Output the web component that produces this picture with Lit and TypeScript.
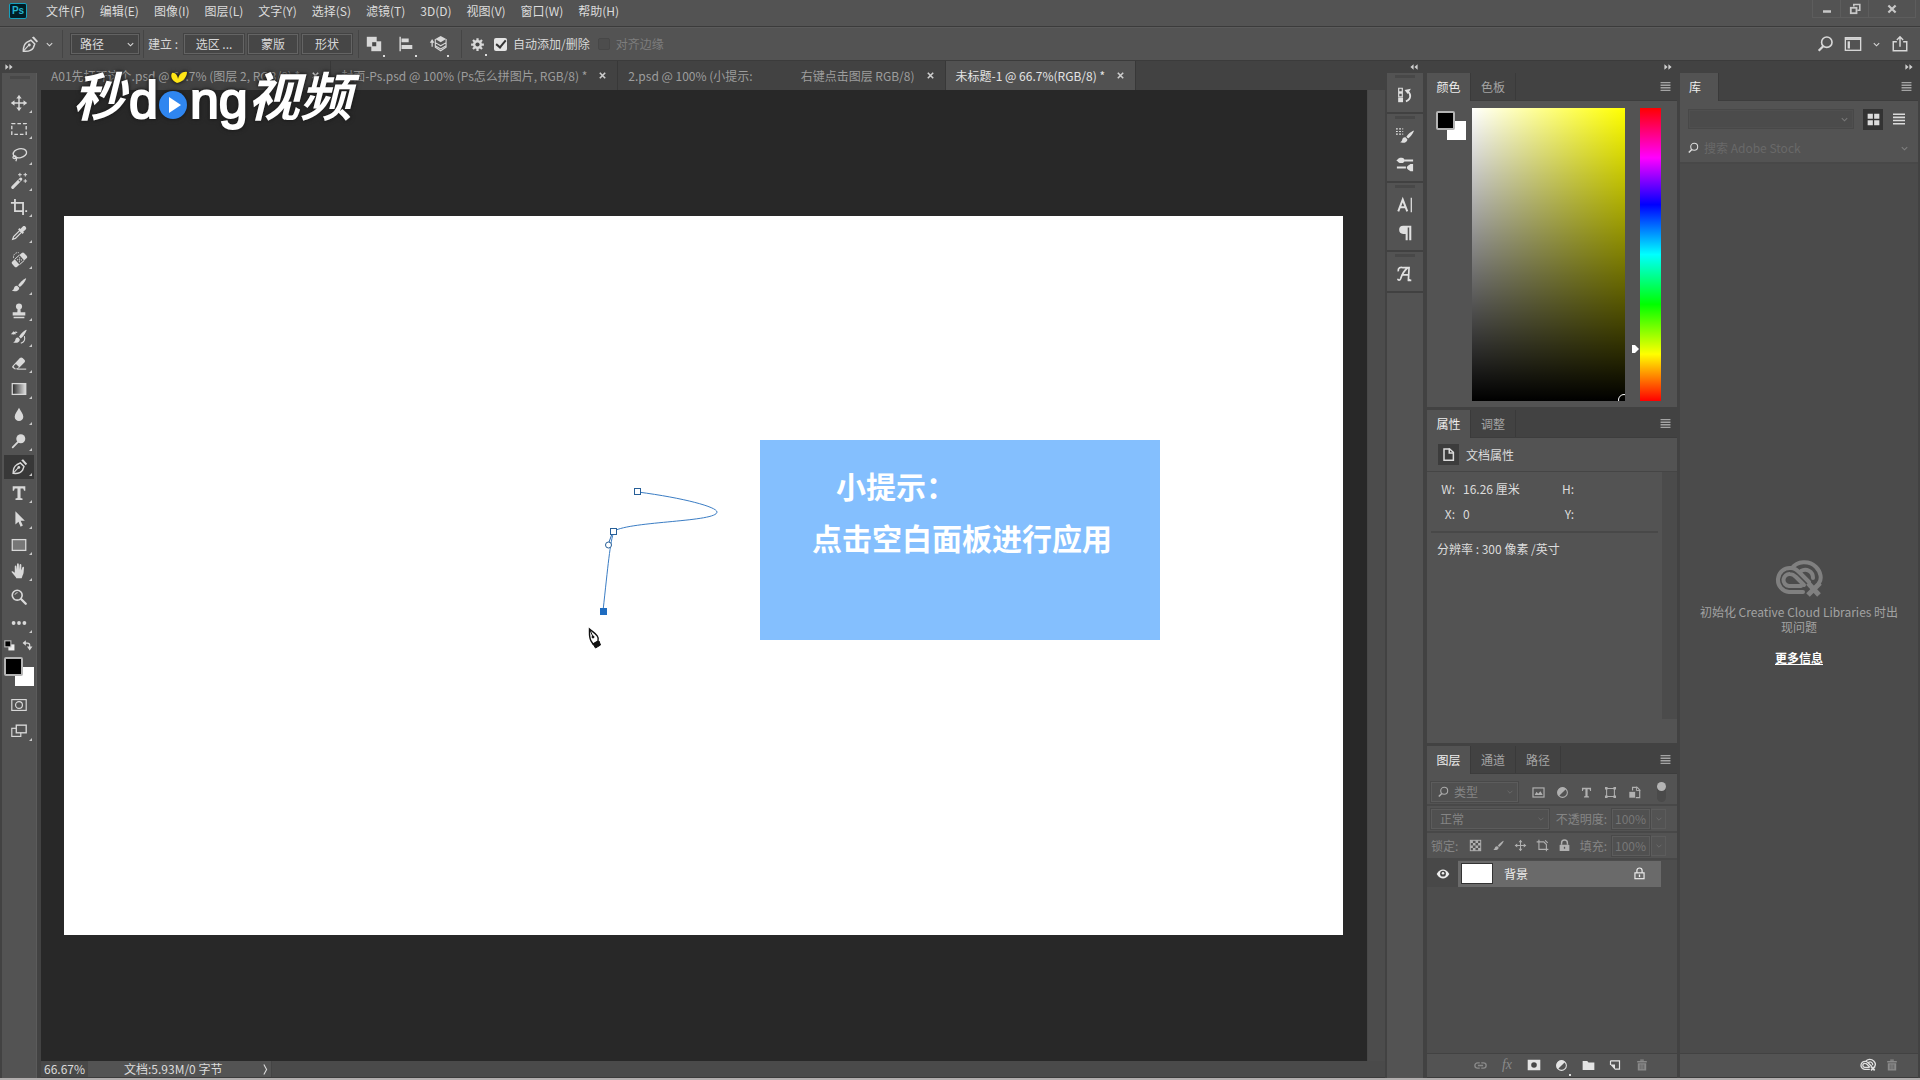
import { LitElement, html, svg, css, nothing, type TemplateResult, type SVGTemplateResult } from "lit";
import { customElement, property } from "lit/decorators.js";
import { classMap } from "lit/directives/class-map.js";

/* Every glyph is drawn on a 20 x 20 grid with currentColor. */
const glyphs: Record<string, SVGTemplateResult> = {
  move: svg`<path d="M10 2v16M2 10h16" stroke="currentColor" stroke-width="1.6"/><path d="M10 1l3 4H7zM10 19l-3-4h6zM1 10l4-3v6zM19 10l-4 3V7z" fill="currentColor"/>`,
  marquee: svg`<rect x="2" y="4" width="16" height="12" fill="none" stroke="currentColor" stroke-width="1.5" stroke-dasharray="4 2.2"/>`,
  lasso: svg`<ellipse cx="11" cy="8" rx="7.5" ry="5" transform="rotate(-12 11 8)" fill="none" stroke="currentColor" stroke-width="1.5"/><path d="M5 11c-2 0-2.5 3 0 3s2.5-3 0-3c2 1 3 3 1.5 6" fill="none" stroke="currentColor" stroke-width="1.4"/>`,
  wand: svg`<path d="M3 17L12 8" stroke="currentColor" stroke-width="3.4" stroke-linecap="round"/><path d="M9.5 8.500l2 2" stroke="#535353" stroke-width="1.2"/><path d="M11 1v4M9 3h4M17 1v4M15 3h4M17 8v4M15 10h4" stroke="currentColor" stroke-width="1.1"/>`,
  crop: svg`<path d="M5.5 1v13.500H15M1 5.500h13.500V19M17 14.500h2" fill="none" stroke="currentColor" stroke-width="2"/>`,
  dropper: svg`<path d="M3 17l1-3 7-7 2 2-7 7z" fill="none" stroke="currentColor" stroke-width="1.4"/><path d="M9 6l5 5 1.500-1.500-.8-.8 3-3c1.200-1.600-1.200-4.600-3.200-3.200l-3 3-1-1z" fill="currentColor"/>`,
  heal: svg`<path d="M4 9a5 5 0 0 1 6-6" fill="none" stroke="currentColor" stroke-dasharray="2 1"/><g transform="rotate(-42 10.500 11)"><rect x="1.5" y="7" width="18" height="8" rx="2" fill="currentColor"/><rect x="7" y="7" width="7" height="8" fill="#535353"/><path d="M8.500 9.500h1.200M11.500 9.500h1.200M8.500 12.500h1.200M11.500 12.500h1.200M10 11h1.200" stroke="currentColor" stroke-width="1.3"/><path d="M7 7h7M7 15h7" stroke="currentColor"/></g>`,
  brush: svg`<path d="M17.500 2.500c-3 1.500-6.500 4.800-8.500 7.800l2 2c3-2.300 5.700-6 7-9.300z" fill="currentColor"/><path d="M8.200 11c-2.400-.3-3.500 1.200-3.900 3-.2 1.200-1 2-2.300 2.500 2.800 1 8.300.8 8.200-3.500z" fill="currentColor"/>`,
  stamp: svg`<circle cx="10" cy="5" r="3.4" fill="currentColor"/><path d="M8.500 7h3l.4 4.500H17V15H3v-3.500h5.100zM4 16.500h12V18H4z" fill="currentColor"/>`,
  history: svg`<path d="M18 2c-3 1.500-6.500 4.800-8 7.800l2 2c3-2.300 5-6 6.500-9.300zM9.200 10.500c-2.400-.3-3 1.200-3.400 3-.2 1.200-1 2-2.300 2.500 2.800 1 7.500.8 7.400-3.500z" fill="currentColor"/><path d="M8 5C6 4 4 5 3.500 7M16 9c1 4-1 7-4 8" fill="none" stroke="currentColor" stroke-width="1.2"/><path d="M1 7h6L4 3.500z" fill="currentColor"/>`,
  eraser: svg`<path d="M2.500 13.500L11 4.500c1-1 2-1 3 0l2 2c1 1 1 2 0 3L8.500 17H5l-2.500-2z" fill="currentColor"/><path d="M4 13.600l2.600-2.600 3.400 3.400L8 16H5.600z" fill="#535353"/><path d="M8 16.800h10" stroke="currentColor" stroke-width="1.2"/>`,
  gradient: svg`<defs><linearGradient id="tool-gradient"><stop offset="0" stop-color="#2a2a2a"/><stop offset="1" stop-color="#e0e0e0"/></linearGradient></defs><rect x="2.5" y="4" width="15" height="12" fill="url(#tool-gradient)" stroke="currentColor" stroke-width="1.4"/>`,
  drop: svg`<path d="M10 2c1.500 3.500 4.800 6.300 4.800 10a4.800 4.800 0 0 1-9.600 0C5.200 8.300 8.500 5.500 10 2z" fill="currentColor"/>`,
  dodge: svg`<circle cx="12" cy="7.5" r="5" fill="currentColor"/><path d="M9 11l-6 6" stroke="currentColor" stroke-width="2" stroke-linecap="round"/>`,
  pen: svg`<path d="M3.500 17c0-4.500 1.500-8 4-9.500l4-2 4 4-1.500 4C12.500 16 8 17.500 3.500 17z" fill="none" stroke="currentColor" stroke-width="1.6"/><path d="M12.500 2.500l2-1 4.500 5-1.500 1.500z" fill="currentColor"/><path d="M4 16.500l5.500-6" stroke="currentColor" stroke-width="1.2"/><circle cx="9.8" cy="10.5" r="1.5" fill="currentColor"/>`,
  type: svg`<path d="M3 2.500h14v5h-1.400l-.9-2.600h-3v10.600l2.200.5V17.800H6.100V16l2.200-.5V4.900h-3L4.400 7.500H3z" fill="currentColor"/>`,
  select: svg`<path d="M6 1.500v14.500l3.400-3 2.400 5.500 2.500-1.200-2.500-5.300h4.700z" fill="currentColor"/>`,
  rect: svg`<rect x="2.5" y="4" width="15" height="12" fill="#777" stroke="currentColor" stroke-width="1.4"/>`,
  hand: svg`<path d="M6.500 17c-1.500-2-3.500-4-5-6.200.8-1.200 2-.6 3.800 1.200V5c0-1.400 1.700-1.400 1.800 0l.3 4 .4-6.500c.1-1.400 1.900-1.400 2 0l.2 6.300.7-5.800c.2-1.300 1.900-1.200 1.900.2L12.500 9.500l1.300-3.700c.5-1.100 2-.7 1.800.6C15 11 15.500 13 14 15l-1 3H7z" fill="currentColor"/>`,
  zoom: svg`<circle cx="8" cy="8" r="5.5" fill="none" stroke="currentColor" stroke-width="1.8"/><path d="M12.500 12.500l5 5" stroke="currentColor" stroke-width="2.6" stroke-linecap="round"/><path d="M5.500 7.500a3 3 0 0 1 3-2.300" fill="none" stroke="currentColor"/>`,
  more: svg`<circle cx="4" cy="10" r="2.1" fill="currentColor"/><circle cx="10" cy="10" r="2.1" fill="currentColor"/><circle cx="16" cy="10" r="2.1" fill="currentColor"/>`,
  mask: svg`<rect x="2" y="4" width="16" height="12" fill="none" stroke="currentColor" stroke-width="1.3"/><circle cx="10" cy="10" r="3.8" fill="none" stroke="currentColor" stroke-width="1.3"/>`,
  screen: svg`<rect x="2" y="7" width="10" height="9" fill="none" stroke="currentColor" stroke-width="1.3"/><rect x="7" y="3.5" width="11" height="8.5" fill="#535353" stroke="currentColor" stroke-width="1.5"/>`,
  unite: svg`<rect x="2" y="2" width="11" height="11" fill="currentColor"/><rect x="7" y="7" width="11" height="11" fill="currentColor"/><rect x="8" y="8" width="4.5" height="4.5" fill="#484848"/>`,
  align: svg`<path d="M3.500 2v16" stroke="currentColor" stroke-width="1.6"/><path d="M5 4h8v4H5zM5 11h12v4.500H5z" fill="currentColor"/>`,
  arrange: svg`<path d="M3.500 7v6" stroke="currentColor" stroke-width="1.4"/><path d="M3.500 4.500l2.600 4H.9z" fill="currentColor"/><path d="M13 1l6 3.500L13 8 7 4.500z" fill="currentColor"/><path d="M7 8.500l6 3.500 6-3.500M7 12l6 3.500 6-3.500M7 4.500v9l6 4 6-4v-9" fill="none" stroke="currentColor" stroke-width="1.2"/>`,
  gear: svg`<path d="M10 1.500v17M1.500 10h17M4 4l12 12M16 4L4 16" stroke="currentColor" stroke-width="3"/><circle cx="10" cy="10" r="6" fill="currentColor"/><circle cx="10" cy="10" r="2.8" fill="#484848"/>`,
  search: svg`<circle cx="12" cy="8" r="5.8" fill="none" stroke="currentColor" stroke-width="1.8"/><path d="M8 12.500l-5 5" stroke="currentColor" stroke-width="2.6"/>`,
  workspace: svg`<rect x="1.5" y="3" width="17" height="14" fill="none" stroke="currentColor" stroke-width="1.5"/><path d="M1.500 4.500h17" stroke="currentColor" stroke-width="2"/><rect x="4" y="7" width="2.6" height="8" fill="currentColor"/>`,
  share: svg`<path d="M6.500 7.500H2.500v10h15v-10h-4" fill="none" stroke="currentColor" stroke-width="1.6"/><path d="M10 13V2M6.500 5.500L10 2l3.500 3.500" fill="none" stroke="currentColor" stroke-width="1.6"/>`,
  chevron: svg`<path d="M4 7l6 6 6-6" fill="none" stroke="currentColor" stroke-width="2.4"/>`,
  chevronRight: svg`<path d="M7 1l5 9-5 9" fill="none" stroke="currentColor" stroke-width="2"/>`,
  forward: svg`<path d="M1 3l8 7-8 7zM11 3l8 7-8 7z" fill="currentColor"/>`,
  back: svg`<path d="M9 3l-8 7 8 7zM19 3l-8 7 8 7z" fill="currentColor"/>`,
  menu: svg`<path d="M1 3h18M1 7.600h18M1 12.300h18M1 17h18" stroke="currentColor" stroke-width="2.6"/>`,
  close: svg`<path d="M4 4l12 12M16 4L4 16" stroke="currentColor" stroke-width="3.6"/>`,
  minimize: svg`<path d="M2 15h16" stroke="currentColor" stroke-width="5"/>`,
  restore: svg`<path d="M8 6V2.500h10V12h-4" fill="none" stroke="currentColor" stroke-width="2.6"/><rect x="3" y="8" width="9.5" height="9" fill="none" stroke="currentColor" stroke-width="3"/>`,
  historyPanel: svg`<path d="M3 2.500h4v4H3zM3 8h4v4H3z" fill="none" stroke="currentColor" stroke-width="1.3"/><rect x="2.4" y="13" width="5.4" height="5" fill="currentColor"/><path d="M11 17c6-2 6-8 2-11" fill="none" stroke="currentColor" stroke-width="2"/><path d="M9.500 4.500L16.500 3 13 9z" fill="currentColor"/>`,
  brushPanel: svg`<path d="M0 2h2M0 5h2M0 8h2M3.500 2h2M3.500 5h2M3.500 8h2M7 2h1M7 5h1M7 8h1" stroke="currentColor" stroke-width="1.3"/><path d="M19.500 4c-3 1.500-6 4-8 6.800l2 2c2.800-2 5-5.200 6.300-8.200zM10.500 11.500c-2.400-.3-3.200 1.200-3.600 2.800-.2 1.200-1 2.200-2.300 2.700 2.800 1 8 .6 8-3.500z" fill="currentColor"/>`,
  brushSet: svg`<path d="M9 6h10M1 14h10" stroke="currentColor" stroke-width="2.2"/><path d="M0 6c2 0 2-3 5.500-3C9 3 9.500 5 9.500 6S9 9 5.500 9C2 9 2 6 0 6zM12 14c0-2 3-3 4-4h3v8h-3c-1-1-4-2-4-4z" fill="currentColor"/>`,
  character: svg`<path d="M2.500 17L7.500 4l5 13M4.200 12.500h6.600" fill="none" stroke="currentColor" stroke-width="2.2"/><path d="M17 2v16" stroke="currentColor" stroke-width="1.4"/>`,
  paragraph: svg`<path d="M9 2h8v16h-2.300V4H13v14h-2.300v-7H8A4.500 4.500 0 0 1 8 2z" fill="currentColor"/>`,
  glyphPanel: svg`<path d="M2.500 7C2 3 5 2 8 3h6.500L13.800 16.500h2M13 3C9 6 6.500 11 5 15.500c-.7 1.800-3 1.500-3-.2M6 11h8.500M13 17h4" fill="none" stroke="currentColor" stroke-width="1.9"/>`,
  grid: svg`<path d="M1 1h8v8H1zM11 1h8v8h-8zM1 11h8v8H1zM11 11h8v8h-8z" fill="currentColor"/>`,
  list: svg`<path d="M0 2h20M0 7.300h20M0 12.600h20M0 18h20" stroke="currentColor" stroke-width="2.6"/>`,
  doc: svg`<path d="M4 2.500h7.500L16.500 7v10.500H4z" fill="none" stroke="currentColor" stroke-width="2"/><path d="M11 2v6h6" fill="none" stroke="currentColor" stroke-width="2"/>`,
  image: svg`<rect x="1.5" y="3" width="17" height="14" fill="none" stroke="currentColor" stroke-width="1.8"/><path d="M4 14l3-5 2.500 3L13 8l3.500 6z" fill="currentColor"/>`,
  adjust: svg`<circle cx="10" cy="10" r="7.5" fill="none" stroke="currentColor" stroke-width="1.6"/><path d="M15.500 4.500a7.700 7.700 0 0 0-11 11z" fill="currentColor"/>`,
  shape: svg`<path d="M4 4h12v12H4z" fill="none" stroke="currentColor" stroke-width="1.6"/><path d="M1.500 1.500h4v4h-4zM14.500 1.500h4v4h-4zM1.500 14.500h4v4h-4zM14.500 14.500h4v4h-4z" fill="currentColor"/>`,
  smart: svg`<path d="M7 7V2h7l4 4v12h-6" fill="none" stroke="currentColor" stroke-width="1.8"/><rect x="2" y="9" width="9" height="9" fill="currentColor"/><path d="M13 1v6h6" fill="none" stroke="currentColor" stroke-width="1.5"/>`,
  checker: svg`<rect x="2" y="2" width="16" height="16" fill="none" stroke="currentColor" stroke-width="1.5"/><path d="M2 2h4v4H2zM10 2h4v4h-4zM6 6h4v4H6zM14 6h4v4h-4zM2 10h4v4H2zM10 10h4v4h-4zM6 14h4v4H6zM14 14h4v4h-4z" fill="currentColor"/>`,
  frame: svg`<path d="M4.500 1v15H19M1 4.500h11l4 4V19M14 2l4 4" fill="none" stroke="currentColor" stroke-width="1.7"/>`,
  lock: svg`<rect x="2.5" y="9" width="15" height="9.5" rx="1" fill="currentColor"/><path d="M5.500 9V6a4.500 4.500 0 0 1 9 0v3" fill="none" stroke="currentColor" stroke-width="2.2"/><rect x="9" y="12" width="2" height="3" fill="#535353"/>`,
  lockLine: svg`<rect x="3" y="9" width="14" height="9" fill="none" stroke="currentColor" stroke-width="1.8"/><path d="M6 9V5.500a4 4 0 0 1 8 0V9" fill="none" stroke="currentColor" stroke-width="1.8"/><rect x="9" y="11.5" width="2" height="4" fill="currentColor"/>`,
  eye: svg`<path d="M1 10c3-5 6-6.500 9-6.500S16 5 19 10c-3 5-6 6.500-9 6.500S4 15 1 10z" fill="currentColor"/><circle cx="10" cy="9.5" r="4.2" fill="#484848"/><circle cx="10" cy="9" r="1.8" fill="currentColor"/>`,
  link: svg`<path d="M9 6.500H6a3.500 3.500 0 0 0 0 7h3M11 6.500h3a3.500 3.500 0 0 1 0 7h-3M6.500 10h7" fill="none" stroke="currentColor" stroke-width="1.8"/>`,
  maskFill: svg`<rect x="1" y="2.5" width="18" height="15" fill="currentColor"/><circle cx="10" cy="10" r="4" fill="#484848"/>`,
  folder: svg`<path d="M1 3h7l2 2.500h9V17H1z" fill="currentColor"/>`,
  newLayer: svg`<path d="M2.500 3h15v14H10" fill="none" stroke="currentColor" stroke-width="2"/><path d="M2 9h8v9z" fill="currentColor"/><path d="M2.500 3v7" stroke="currentColor" stroke-width="2"/>`,
  trash: svg`<path d="M3 7h14v12H3zM2 3.500h16V6H2zM7 1h6v2H7z" fill="currentColor"/><path d="M7 9v8M10 9v8M13 9v8" stroke="#535353" stroke-width="1.1"/>`,
  swap: svg`<path d="M5 5.500h5a4 4 0 0 1 4 4V13" fill="none" stroke="currentColor" stroke-width="2.2"/><path d="M7 .5v10l-6-5zM9 12h10l-5 7z" fill="currentColor"/>`,
  defaults: svg`<rect x="8" y="8" width="11" height="11" fill="#eee"/><rect x="1.5" y="1.5" width="11" height="11" fill="#000" stroke="#bbb" stroke-width="2"/>`,
};

@customElement("ps-icon")
export class PsIcon extends LitElement {
  @property() name = "";
  @property({ type: Number }) size = 18;
  static styles = css`
    :host { display: inline-flex; flex: none; }
    svg { display: block; }
  `;
  render() {
    return html`<svg width=${this.size} height=${this.size} viewBox="0 0 20 20" aria-hidden="true">${glyphs[this.name] ?? nothing}</svg>`;
  }
}

const icon = (name: string, size = 18): TemplateResult => html`<ps-icon name=${name} size=${size}></ps-icon>`;

const menus = ["文件(F)", "编辑(E)", "图像(I)", "图层(L)", "文字(Y)", "选择(S)", "滤镜(T)", "3D(D)", "视图(V)", "窗口(W)", "帮助(H)"];

const tools: [string, string][] = [
  ["move", "移动"], ["marquee", "选框"], ["lasso", "套索"], ["wand", "魔棒"], ["crop", "裁剪"],
  ["dropper", "吸管"], ["heal", "修复"], ["brush", "画笔"], ["stamp", "图章"], ["history", "历史记录画笔"],
  ["eraser", "橡皮擦"], ["gradient", "渐变"], ["drop", "模糊"], ["dodge", "减淡"], ["pen", "钢笔"],
  ["type", "文字"], ["select", "路径选择"], ["rect", "矩形"], ["hand", "抓手"], ["zoom", "缩放"], ["more", "更多"],
];

const documents = [
  { title: "A01先打开这个.psd @ 66.7% (图层 2, RGB/8) *", active: false },
  { title: "封面-Ps.psd @ 100% (Ps怎么拼图片, RGB/8) *", active: false },
  { title: "2.psd @ 100% (小提示:\u3000\u3000\u3000\u3000右键点击图层 RGB/8)", active: false },
  { title: "未标题-1 @ 66.7%(RGB/8) *", active: true },
];

const dockGroups = [["historyPanel"], ["brushPanel", "brushSet"], ["character", "paragraph"], ["glyphPanel"]];

@customElement("app-root")
export class AppRoot extends LitElement {
  static styles = css`
    :host {
      display: block;
      --body: #535353;
      --bar: #424242;
      --edge: #3b3b3b;
      --text: #dcdcdc;
      --off: #858585;
      color: var(--text);
      font: 12px/16px "Noto Sans CJK SC", "Noto Sans", sans-serif;
    }
    * { box-sizing: border-box; }
    button, select, input { font: inherit; color: inherit; margin: 0; }
    button { border: 0; background: none; padding: 0; display: flex; align-items: center; justify-content: center; }
    .app { display: flex; flex-direction: column; height: 100vh; min-height: 800px; background: var(--body); border-bottom: 2px solid #b2aeae; overflow: hidden; }

    .menubar { display: flex; height: 27px; padding: 0 0 4px 9px; align-items: center; border-bottom: 1px solid var(--edge); flex: none; }
    .logo { width: 18px; height: 16px; background: #001d26; border: 1px solid #17a0bd; border-radius: 2px; color: #25b4cf; font: bold 10px/14px "Liberation Sans", sans-serif; text-align: center; margin-right: 12px; }
    .menus { display: flex; flex: 1; }
    .menus button { padding: 0 8px 0 7px; white-space: nowrap; }
    .window { display: flex; align-self: flex-start; color: #c8c8c8; height: 18px; border: 1px solid #5d5d5d; border-top: 0; margin-right: 4px; }
    .window button { width: 28px; border-right: 1px solid #5d5d5d; }
    .window .wide { width: 46px; border: 0; }

    .options { display: flex; align-items: center; height: 34px; padding: 0 11px 0 20px; flex: none; border-bottom: 1px solid var(--edge); border-top: 1px solid #5b5b5b; color: #d8d8d8; }
    .options .group { display: flex; align-items: center; height: 28px; }
    .options .sep { width: 1px; height: 28px; background: #454545; }
    .with-chevron { gap: 6px; padding-right: 8px; }
    .combo { display: flex; align-items: center; position: relative; }
    .combo select { appearance: none; border: 1px solid #626262; background: #454545; height: 20px; width: 100%; padding: 0 8px; line-height: 16px; outline: 1px solid #3f3f3f; }
    .combo ps-icon { position: absolute; right: 4px; pointer-events: none; }
    .mode { width: 68px; margin: 0 4px 0 8px; }
    .make { margin: 0 6px 0 4px; }
    .push { height: 20px; border: 1px solid #646464; background: #464646; width: 50px; outline: 1px solid #434343; }
    .push.wide { width: 60px; }
    .options .pushes { gap: 4px; padding-right: 6px; }
    .flagged { position: relative; }
    .flagged::after { content: ""; position: absolute; right: -2px; bottom: -4px; width: 2px; height: 2px; background: #ddd; }
    .options .path-ops { gap: 14px; padding: 0 14px 0 6px; }
    .options .gearbox { padding: 0 9px 0 8px; }
    .check { display: flex; align-items: center; gap: 6px; margin-right: 8px; }
    .check input { appearance: none; width: 13px; height: 13px; border-radius: 2px; background: #e4e4e4; display: grid; place-items: center; }
    .check input:checked::before { content: ""; width: 4px; height: 8px; border: solid #333; border-width: 0 2px 2px 0; transform: rotate(40deg); margin-bottom: 2px; }
    .check.off { color: #7d7d7d; }
    .check.off input { background: #4d4d4d; border: 1px solid #474747; width: 12px; height: 12px; }
    .spacer { flex: 1; }
    .options .right { gap: 10px; }

    .main { display: flex; flex: 1; min-height: 0; background: var(--bar); gap: 2px; padding-right: 2px; }
    .collapse { height: 12px; display: flex; align-items: center; color: #cfcfcf; flex: none; }
    .collapse.end { justify-content: flex-end; padding-right: 5px; }

    .toolbar { width: 39px; display: flex; flex-direction: column; padding: 0 2px; flex: none; }
    .toolbar .collapse { padding-left: 3px; }
    .toolbody { flex: 1; background: var(--body); display: flex; flex-direction: column; padding: 3px 0 0 2px; border-right: 1px solid #5b5b5b; color: #d9d9d9; }
    .grip { width: 20px; height: 3px; background: #484848; margin: 0 auto 11px; flex: none; }
    .tool { width: 30px; height: 26px; position: relative; flex: none; }
    .tool.active { background: #383838; height: 24px; margin: 1px 0; }
    .tool::after { content: ""; position: absolute; right: 2px; bottom: 3px; border-left: 3px solid transparent; border-bottom: 3px solid #c8c8c8; }
    .tool.plain::after { display: none; }
    .mini { display: flex; justify-content: space-between; padding: 4px 3px 0 0; }
    .swatches { position: relative; width: 30px; height: 29px; margin-bottom: 6px; flex: none; }
    .mini + .swatches { margin-top: 6px; }
    .fg, .bg { position: absolute; width: 19px; height: 19px; }
    .fg { left: 0; top: 0; background: #000; border: 2px solid #b4b4b4; border-radius: 2px; }
    .bg { right: 0; bottom: 0; background: #fff; }

    .document { flex: 1; min-width: 0; display: flex; flex-direction: column; position: relative; }
    .tabs { display: flex; height: 29px; background: var(--bar); flex: none; overflow: hidden; }
    .tab { display: flex; align-items: center; gap: 11px; padding: 0 10px; border-right: 1px solid #383838; color: #9d9d9d; white-space: nowrap; flex: none; }
    .tab button { color: #cdcdcd; }
    .tab.active { background: #515151; color: #e4e4e4; }
    .viewport { flex: 1; display: flex; min-height: 0; }
    .stage { flex: 1; background: #282828; padding: 126px 24px 126px 23px; display: flex; min-width: 0; }
    .scroll { width: 18px; background: #4c4c4c; border-left: 1px solid #484848; }
    .artboard { flex: 1; background: #fff; position: relative; overflow: hidden; }
    .path { position: absolute; left: 500px; top: 260px; }
    .tip { position: absolute; left: 696px; top: 224px; width: 400px; height: 200px; background: #84bffe; color: #fff; font-weight: 700; font-size: 30px; line-height: 52px; padding: 19px 0 0 52px; }
    .tip p { margin: 0; }
    .tip .lead { padding-left: 24px; }
    .status { display: flex; height: 17px; background: #4a4a4a; border-bottom: 1px solid #3b3b3b; flex: none; }
    .status .zoomlevel { width: 47px; padding-left: 3px; background: #484848; }
    .status .info { width: 184px; background: #535353; display: flex; align-items: center; justify-content: space-between; padding: 0 0 0 36px; border-right: 1px solid #444; }
    .watermark { position: absolute; left: 32px; top: 3px; display: flex; align-items: center; height: 64px; color: #fff; font-weight: 700; font-size: 52px; line-height: 64px; filter: drop-shadow(0 0 1px #1c1c1c) drop-shadow(0 0 2px #1c1c1c); }
    .watermark .han { font-style: italic; padding-bottom: 4px; }
    .watermark .latin { font-family: "Liberation Sans", sans-serif; font-weight: 400; -webkit-text-stroke: 2px #fff; padding-top: 8px; }
    .watermark .first { padding-left: 4px; }
    .watermark svg { display: block; margin: 4px 1px 0; }

    .dock { width: 36px; display: flex; flex-direction: column; flex: none; }
    .dockgroup { background: var(--body); border-bottom: 2px solid #414141; padding: 2px 0 3px; display: flex; flex-direction: column; align-items: center; color: #e0e0e0; }
    .dockgroup .grip { margin: 0 0 3px; }
    .dockgroup button { height: 28px; }
    .dock .rest { flex: 1; background: var(--body); }

    .panels { width: 252px; display: flex; flex-direction: column; flex: none; padding-left: 2px; }
    .library { width: 238px; display: flex; flex-direction: column; flex: none; margin-left: 1px; }
    .panel { background: var(--body); display: flex; flex-direction: column; margin-bottom: 3px; flex: none; }
    .panel.grow { flex: 1; margin: 0; min-height: 0; }
    .ptabs { display: flex; height: 28px; background: var(--bar); align-items: stretch; flex: none; border-bottom: 1px solid #3d3d3d; padding-right: 6px; }
    .ptabs button { width: 45px; border-right: 1px solid #3a3a3a; color: #a4a4a4; }
    .ptabs button.active { background: var(--body); color: #eee; width: 44px; height: 28px; }
    .ptabs .pmenu { width: 11px; border: 0; margin-left: auto; }

    .colors { display: flex; padding: 7px 16px 6px 9px; }
    .colors .swatches { margin: 3px 6px 0 0; }
    .field { width: 153px; height: 293px; position: relative; overflow: hidden; background: linear-gradient(to bottom, transparent, #000), linear-gradient(to right, #fff, #ff0); flex: none; }
    .field i { position: absolute; right: -5px; bottom: -5px; width: 12px; height: 12px; border: 1px solid #fff; border-radius: 50%; }
    .hue { position: relative; width: 21px; margin-left: auto; background: linear-gradient(to bottom, #f00, #f0f 17%, #00f 33%, #0ff 50%, #0f0 67%, #ff0 84%, #f00); }
    .hue input { position: absolute; inset: 0; width: 100%; height: 100%; opacity: 0; writing-mode: vertical-lr; }
    .hue svg { position: absolute; left: -9px; }

    .props { height: 333px; }
    .proptitle { display: flex; align-items: center; gap: 7px; height: 34px; padding-left: 11px; border-bottom: 1px solid #454545; flex: none; }
    .docicon { width: 21px; height: 21px; background: #3c3c3c; display: grid; place-items: center; }
    .propbody { display: flex; flex: 1; min-height: 0; margin-bottom: 24px; }
    .propmain { flex: 1; padding: 5px 4px 0; }
    .propgrid { display: grid; grid-template-columns: 24px 81px 22px 1fr; row-gap: 1px; padding: 0 0 5px; line-height: 24px; border-bottom: 2px solid #484848; margin: 0; column-gap: 8px; }
    .propgrid dt { text-align: right; }
    .propgrid dd { margin: 0; }
    .resolution { margin: 8px 6px; }
    .propscroll { width: 15px; background: #4b4b4b; }

    .lrow { display: flex; align-items: center; height: 27px; padding: 0 11px 0 4px; border-bottom: 2px solid #484848; color: var(--off); flex: none; }
    .lrow.filter { height: 32px; padding-top: 6px; }
    .lrow .combo select { background: #505050; border-color: #5c5c5c; outline-color: #494949; }
    .lrow .combo ps-icon { color: #6a6a6a; }
    .kind { width: 87px; }
    .lrow .kind select { padding-left: 22px; }
    .lrow .combo .lead-icon { left: 6px; right: auto; color: #ababab; }
    .icons { display: flex; align-items: center; justify-content: space-between; color: #b0b0b0; }
    .filter .icons { flex: 1; padding: 0 16px 0 14px; }
    .toggle { width: 9px; height: 20px; border-radius: 5px; background: #4a4a4a; }
    .toggle::before { content: ""; display: block; width: 9px; height: 9px; border-radius: 50%; background: #b4b4b4; margin-bottom: 11px; }
    .blend { width: 118px; }
    .lrow .num { margin-left: auto; display: flex; align-items: center; gap: 5px; }
    .num input { width: 38px; height: 20px; border: 1px solid #5c5c5c; background: #505050; color: #777; padding: 0 2px; outline: 1px solid #494949; }
    .num button { width: 15px; height: 20px; border: 1px solid #5c5c5c; margin-left: -4px; color: #6d6d6d; }
    .locks { width: 102px; margin-left: 11px; }
    .layers { flex: 1; background: #4d4d4d; min-height: 0; }
    .layer { display: flex; height: 27px; align-items: center; }
    .layer .eye { width: 31px; height: 27px; background: #484848; color: #eee; }
    .layer .name { display: flex; align-items: center; gap: 11px; background: #6a6a6a; flex: 1; height: 26px; padding: 0 15px 0 3px; margin-right: 16px; color: #eee; }
    .thumb { width: 32px; height: 21px; background: #fff; border: 1px solid #333; }
    .layer .name ps-icon { margin-left: auto; }
    .foot { display: flex; height: 25px; align-items: center; border-top: 1px solid #424242; border-bottom: 1px solid #3b3b3b; background: var(--body); color: #e4e4e4; flex: none; padding-bottom: 1px; }
    .foot.layerfoot { padding-left: 45px; gap: 11px; }
    .foot.libfoot { justify-content: flex-end; padding-right: 18px; gap: 8px; }
    .foot button { width: 16px; }
    .foot .faded { color: #8a8a8a; }
    .foot .fx { font: italic 14px/16px "Liberation Serif", serif; }

    .library .ptabs button.active { width: 39px; padding-right: 8px; }
    .libhead { display: flex; align-items: center; padding: 4px 9px 0 9px; flex: none; height: 32px; }
    .libhead .combo { flex: 1; margin-right: 10px; }
    .libhead .combo select { height: 18px; background: #4b4b4b; border-color: #4f4f4f; outline-color: #484848; }
    .libhead .combo ps-icon { color: #777; }
    .libhead .view { width: 20px; height: 21px; }
    .libhead .view.on { background: #333; margin-right: 6px; }
    .search { display: flex; align-items: center; gap: 5px; height: 31px; padding: 0 9px 0 7px; flex: none; border-bottom: 2px solid #484848; }
    .search input { flex: 1; min-width: 0; border: 0; background: none; padding: 0; }
    .search input::placeholder { color: #696969; }
    .search .down { color: #7f7f7f; }
    .libbody { flex: 1; background: #4b4b4b; display: flex; flex-direction: column; align-items: center; justify-content: center; text-align: center; color: #a2a2a2; padding: 8px 10px 0; }
    .libbody p { margin: 6px 0 16px; line-height: 15px; width: 204px; }
    .libbody a { color: #fff; font-weight: 700; }
  `;

  private cloud(w: number, h: number, color: string) {
    return html`<svg width=${w} height=${h} viewBox="0 0 48 38" fill="none" stroke=${color} stroke-width="4" stroke-linecap="round" aria-hidden="true">
      <path d="M28 32H14A12 12 0 1 1 16 8c4 0 6 2 9 5l9 9" />
      <path d="M17 8C22 1 34 0 41 7c5 5 6 12 3 16" />
      <path d="M26 26H14a6 6 0 1 1 1-12c3 0 4 1 6 3l8 8" />
      <path d="M26 11c5-3 12 0 12 7" />
      <path d="M33 23l11 12M45 23L33 35" stroke-width="5" stroke-linecap="butt" />
    </svg>`;
  }

  private panelTabs(names: string[]) {
    return html`<div class="ptabs" role="tablist">
      ${names.map((n, i) => html`<button role="tab" class=${classMap({ active: i === 0 })}>${n}</button>`)}
      <button class="pmenu" aria-label="面板菜单">${icon("menu", 11)}</button>
    </div>`;
  }

  private swatches() {
    return html`<div class="swatches"><div class="bg"></div><div class="fg"></div></div>`;
  }

  private optionsBar() {
    return html`<div class="options">
      <button class="group with-chevron" aria-label="钢笔">${icon("pen", 19)}${icon("chevron", 9)}</button>
      <span class="sep"></span>
      <div class="group">
        <div class="combo mode"><select aria-label="工具模式"><option>路径</option></select>${icon("chevron", 9)}</div>
        <span class="sep"></span>
        <span class="make">建立 :</span>
      </div>
      <div class="group pushes">
        <button class="push wide">选区 ...</button><button class="push">蒙版</button><button class="push">形状</button>
      </div>
      <span class="sep"></span>
      <div class="group path-ops">
        <button class="flagged" aria-label="路径操作">${icon("unite")}</button>
        <button class="flagged" aria-label="路径对齐">${icon("align")}</button>
        <button class="flagged" aria-label="路径排列">${icon("arrange")}</button>
      </div>
      <span class="sep"></span>
      <div class="group gearbox"><button class="flagged" aria-label="设置">${icon("gear", 15)}</button></div>
      <label class="check"><input type="checkbox" checked />自动添加/删除</label>
      <label class="check off"><input type="checkbox" disabled />对齐边缘</label>
      <span class="spacer"></span>
      <div class="group right">
        <button aria-label="搜索">${icon("search")}</button>
        <button class="group" aria-label="工作区">${icon("workspace")}</button>
        ${icon("chevron", 9)}
        <button aria-label="共享">${icon("share")}</button>
      </div>
    </div>`;
  }

  private documentArea() {
    return html`<section class="document">
      <div class="tabs">
        ${documents.map((d) => html`<div class=${classMap({ tab: true, active: d.active })}>
          <span>${d.title}</span><button aria-label="关闭">${icon("close", 9)}</button>
        </div>`)}
      </div>
      <div class="viewport">
        <div class="stage">
          <div class="artboard">
            <svg class="path" width="180" height="180" viewBox="0 0 180 180" fill="none" stroke="#3b7dc4" aria-hidden="true">
              <path d="M74 16C120 22 153 31 153 36C153 46 68 45 50 55C46 66 44 90 39 135" />
              <path d="M49 55L44 69" stroke="#2b68ad" />
              <rect x="70.5" y="12.5" width="6" height="6" fill="#fff" stroke="#275f98" />
              <rect x="46.5" y="52.5" width="6" height="6" fill="#fff" stroke="#275f98" />
              <circle cx="44.5" cy="69" r="3" fill="#fff" stroke="#275f98" />
              <rect x="36" y="132" width="7" height="7" fill="#1f6cc0" stroke="none" />
              <g stroke="#111"><path d="M25.500 153c0 5-.5 8 1.500 12l2 3 5-3c2-5-4-8-8.500-12z" fill="#fff" stroke-width="1.4" /><path d="M25.500 153l4 9" /><circle cx="29" cy="161" r="1" fill="#111" /><path d="M29 168l6-3 1.500 4-5 3z" fill="#111" /></g>
            </svg>
            <div class="tip"><p class="lead">小提示：</p><p>点击空白面板进行应用</p></div>
          </div>
        </div>
        <div class="scroll"></div>
      </div>
      <div class="status">
        <span class="zoomlevel">66.67%</span>
        <span class="info"><span>文档:5.93M/0 字节</span>${icon("chevronRight", 11)}</span>
      </div>
      <div class="watermark">
        <span class="han">秒</span><span class="latin first">d</span>
        <svg width="30" height="58" viewBox="0 0 30 58" aria-hidden="true">
          <circle cx="14" cy="36" r="14" fill="#2f86f0" />
          <path d="M10 28v16l12-8z" fill="#fff" />
          <path d="M18 14C13 12 11 7 13 4c4-1 6 4 6 6 1-5 5-8 9-7 0 6-5 10-10 11z" fill="#ffe516" />
        </svg>
        <span class="latin">ng</span><span class="han">视频</span>
      </div>
    </section>`;
  }

  private panelColumn() {
    const hue = 81;
    return html`<aside class="panels">
      <div class="collapse end">${icon("forward", 8)}</div>
      <section class="panel">
        ${this.panelTabs(["颜色", "色板"])}
        <div class="colors">
          ${this.swatches()}
          <div class="field"><i></i></div>
          <div class="hue">
            <input type="range" aria-label="色相" value=${hue} />
            <svg style="top:${hue}%" width="8" height="8" viewBox="0 0 8 8" aria-hidden="true"><path d="M1 0h3l4 4-4 4H1z" fill="#fff" /></svg>
          </div>
        </div>
      </section>
      <section class="panel props">
        ${this.panelTabs(["属性", "调整"])}
        <div class="proptitle"><span class="docicon">${icon("doc", 15)}</span>文档属性</div>
        <div class="propbody">
          <div class="propmain">
            <dl class="propgrid"><dt>W:</dt><dd>16.26 厘米</dd><dt>H:</dt><dd></dd><dt>X:</dt><dd>0</dd><dt>Y:</dt><dd></dd></dl>
            <p class="resolution">分辨率 : 300 像素 /英寸</p>
          </div>
          <div class="propscroll"></div>
        </div>
      </section>
      <section class="panel grow">
        ${this.panelTabs(["图层", "通道", "路径"])}
        <div class="lrow filter">
          <div class="combo kind"><ps-icon class="lead-icon" name="search" size="12"></ps-icon><select aria-label="筛选"><option>类型</option></select>${icon("chevron", 8)}</div>
          <div class="icons">${["image", "adjust", "type", "shape", "smart"].map((n) => html`<button aria-label=${n}>${icon(n, 13)}</button>`)}</div>
          <button class="toggle" aria-label="开关筛选"></button>
        </div>
        <div class="lrow">
          <div class="combo blend"><select aria-label="混合模式"><option>正常</option></select>${icon("chevron", 8)}</div>
          <div class="num"><label for="opacity">不透明度:</label><input id="opacity" value="100%" /><button aria-label="不透明度滑块">${icon("chevron", 8)}</button></div>
        </div>
        <div class="lrow">
          <span>锁定:</span>
          <div class="icons locks">${["checker", "brush", "move", "frame", "lock"].map((n) => html`<button aria-label=${n}>${icon(n, 13)}</button>`)}</div>
          <div class="num"><label for="fill">填充:</label><input id="fill" value="100%" /><button aria-label="填充滑块">${icon("chevron", 8)}</button></div>
        </div>
        <div class="layers">
          <div class="layer">
            <button class="eye" aria-label="可见性">${icon("eye", 14)}</button>
            <div class="name"><span class="thumb"></span>背景${icon("lockLine", 13)}</div>
          </div>
        </div>
        <div class="foot layerfoot">
          <button class="faded" aria-label="链接">${icon("link", 15)}</button>
          <button class="faded fx">fx</button>
          <button aria-label="蒙版">${icon("maskFill", 14)}</button>
          <button class="flagged" aria-label="调整">${icon("adjust", 13)}</button>
          <button aria-label="组">${icon("folder", 13)}</button>
          <button aria-label="新建">${icon("newLayer", 12)}</button>
          <button class="faded" aria-label="删除">${icon("trash", 12)}</button>
        </div>
      </section>
    </aside>`;
  }

  private libraryColumn() {
    return html`<aside class="library">
      <div class="collapse end">${icon("forward", 8)}</div>
      <section class="panel grow">
        ${this.panelTabs(["库"])}
        <div class="libhead">
          <div class="combo"><select aria-label="库"><option></option></select>${icon("chevron", 9)}</div>
          <button class="view on" aria-label="网格">${icon("grid", 13)}</button>
          <button class="view" aria-label="列表">${icon("list", 12)}</button>
        </div>
        <div class="search">${icon("search", 12)}<input type="search" aria-label="搜索" placeholder="搜索 Adobe Stock" /><span class="down">${icon("chevron", 9)}</span></div>
        <div class="libbody">
          ${this.cloud(48, 38, "#808080")}
          <p>初始化 Creative Cloud Libraries 时出现问题</p>
          <a href="#more">更多信息</a>
        </div>
        <div class="foot libfoot">
          <button aria-label="同步">${this.cloud(17, 14, "#e0e0e0")}</button>
          <button class="faded" aria-label="删除">${icon("trash", 12)}</button>
        </div>
      </section>
    </aside>`;
  }

  render() {
    return html`<div class="app">
      <header class="menubar">
        <span class="logo">Ps</span>
        <nav class="menus">${menus.map((m) => html`<button>${m}</button>`)}</nav>
        <div class="window">
          <button aria-label="最小化">${icon("minimize", 10)}</button>
          <button aria-label="还原">${icon("restore", 12)}</button>
          <button class="wide" aria-label="关闭">${icon("close", 12)}</button>
        </div>
      </header>
      ${this.optionsBar()}
      <main class="main">
        <aside class="toolbar">
          <div class="collapse">${icon("forward", 8)}</div>
          <div class="toolbody">
            <div class="grip"></div>
            ${tools.map(([n, label]) => html`<button class=${classMap({ tool: true, active: n === "pen", plain: n === "zoom" })} aria-label=${label}>${icon(n)}</button>`)}
            <div class="mini">${icon("defaults", 11)}${icon("swap", 11)}</div>
            ${this.swatches()}
            <button class="tool plain" aria-label="快速蒙版">${icon("mask")}</button>
            <button class="tool" aria-label="屏幕模式">${icon("screen")}</button>
          </div>
        </aside>
        ${this.documentArea()}
        <aside class="dock">
          <div class="collapse end">${icon("back", 8)}</div>
          ${dockGroups.map((g) => html`<div class="dockgroup"><div class="grip"></div>${g.map((n) => html`<button aria-label=${n}>${icon(n)}</button>`)}</div>`)}
          <div class="rest"></div>
        </aside>
        ${this.panelColumn()}
        ${this.libraryColumn()}
      </main>
    </div>`;
  }
}
